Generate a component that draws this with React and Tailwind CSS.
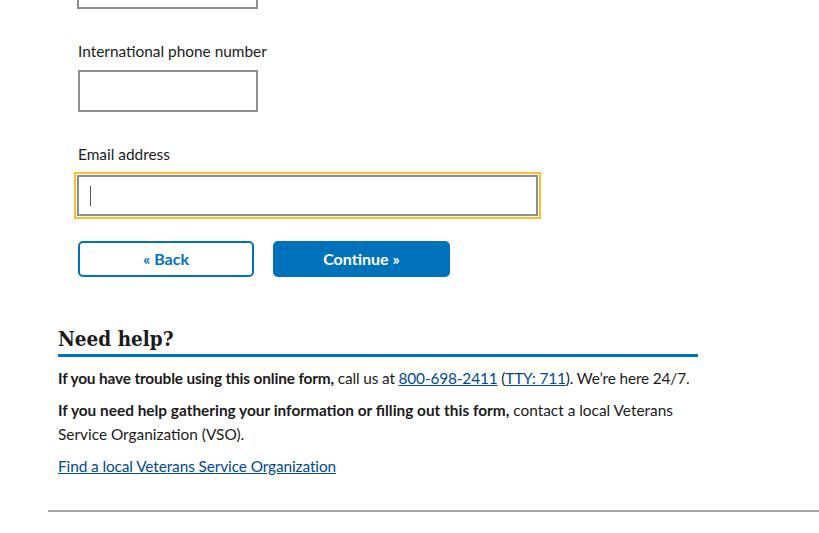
export default function App() {
  return (
    <div className="relative h-[533px] w-[819px] overflow-hidden bg-white font-['Lato',sans-serif] text-[15.4px] leading-6 text-[#1b1b1b]">
      {/* FORM */}
      <div className="pl-[77px]">
        <div className="h-[9px] w-[181px] border-2 border-t-0 border-[#8e8e8e]" />

        <label className="mt-[30px] block pl-px">International phone number</label>
        <div className="ml-px mt-[7px] h-[42px] w-[180px] border-2 border-[#8e8e8e]" />

        <label className="mt-[30px] block pl-px">Email address</label>
        <div className="mt-[9px] flex h-[41px] w-[461px] items-center border-2 border-[#8e8e8e] pl-[11px] outline-2 outline-offset-1 outline-[#ffbe2e]">
          <div className="h-[20px] w-px bg-[#555]" />
        </div>

        <div className="ml-px mt-[25px] flex gap-[19px]">
          <button className="flex h-[36px] w-[176px] items-center justify-center rounded-[5px] border-2 border-[#0071bb] bg-white text-[16px] font-bold text-[#0071bb]">
            « Back
          </button>
          <button className="flex h-[36px] w-[177px] items-center justify-center rounded-[5px] bg-[#0071bb] text-[16px] font-bold text-white">
            Continue »
          </button>
        </div>
      </div>

      {/* NEED HELP */}
      <div className="ml-[58px] mt-[48px] w-[640px]">
        <h2 className="h-[32px] border-b-[3px] border-[#0071bb] font-['DejaVu_Serif_Condensed','DejaVu_Serif',serif] text-[20.5px] font-bold leading-[29px]">
          Need help?
        </h2>
        <p className="mt-[9px] whitespace-nowrap tracking-[-0.15px]">
          <b>If you have trouble using this online form,</b> call us at{" "}
          <a href="#" className="text-[#004795] underline">800-698-2411</a> (
          <a href="#" className="text-[#004795] underline">TTY: 711</a>). We’re here 24/7.
        </p>
        <p className="mt-[8px]">
          <b>If you need help gathering your information or filling out this form,</b> contact a local Veterans
          Service Organization (VSO).
        </p>
        <p className="mt-[8px] tracking-[-0.1px]">
          <a href="#" className="text-[#004795] underline">Find a local Veterans Service Organization</a>
        </p>
      </div>

      <div className="ml-[48px] mt-[32px] h-[2px] bg-[#a6a6a6]" />
    </div>
  );
}
